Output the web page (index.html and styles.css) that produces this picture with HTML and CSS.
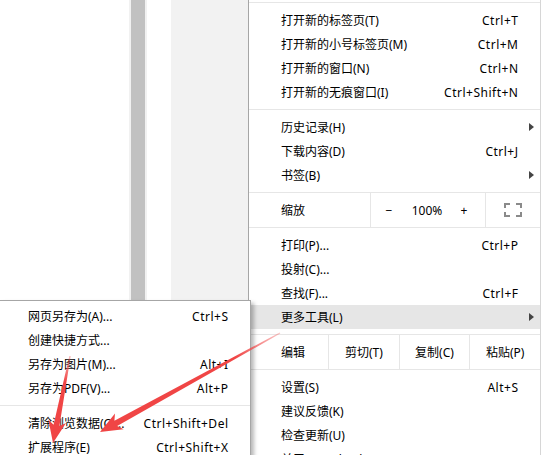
FILE: index.html
```html
<!DOCTYPE html>
<html lang="zh-CN">
<head>
  <meta charset="UTF-8">
  <title>更多工具</title>
  <link rel="stylesheet" href="styles.css">
</head>
<body>

<div class="screen">
  <div class="page-blank"></div>
  <div class="scrollbar"><div class="thumb"></div></div>
  <div class="page-gap"></div>
  <div class="page-panel"></div>

  <!-- menu principal -->
  <div class="menu">
    <div class="sep sep-top"></div>
    <div class="item"><span class="label">打开新的标签页(T)</span><span class="key">Ctrl+T</span></div>
    <div class="item"><span class="label">打开新的小号标签页(M)</span><span class="key">Ctrl+M</span></div>
    <div class="item"><span class="label">打开新的窗口(N)</span><span class="key">Ctrl+N</span></div>
    <div class="item"><span class="label">打开新的无痕窗口(I)</span><span class="key">Ctrl+Shift+N</span></div>
    <div class="sep"></div>
    <div class="item"><span class="label">历史记录(H)</span><span class="arrow"></span></div>
    <div class="item"><span class="label">下载内容(D)</span><span class="key">Ctrl+J</span></div>
    <div class="item"><span class="label">书签(B)</span><span class="arrow"></span></div>

    <div class="zoom">
      <div class="zoom-label">缩放</div>
      <div class="zoom-ctl">
        <span>−</span>
        <span>100%</span>
        <span>+</span>
      </div>
      <div class="zoom-full">
        <svg width="18" height="14" viewBox="0 0 18 14">
          <path d="M1 5V1H6M12 1H17V5M17 9V13H12M6 13H1V9" fill="none" stroke="#8a8a8a" stroke-width="2"/>
        </svg>
      </div>
    </div>

    <div class="item"><span class="label">打印(P)...</span><span class="key">Ctrl+P</span></div>
    <div class="item"><span class="label">投射(C)...</span></div>
    <div class="item"><span class="label">查找(F)...</span><span class="key">Ctrl+F</span></div>
    <div class="item active"><span class="label">更多工具(L)</span><span class="arrow"></span></div>

    <div class="edit">
      <div class="edit-label">编辑</div>
      <div class="edit-btn">剪切(T)</div>
      <div class="edit-btn">复制(C)</div>
      <div class="edit-btn">粘贴(P)</div>
    </div>

    <div class="item"><span class="label">设置(S)</span><span class="key">Alt+S</span></div>
    <div class="item"><span class="label">建议反馈(K)</span></div>
    <div class="item"><span class="label">检查更新(U)</span></div>
    <div class="item"><span class="label">关于 Google Chrome(G)</span></div>
  </div>
</div>

<!-- submenu de "更多工具" -->
<div class="submenu">
  <div class="item sub-item"><span class="label">网页另存为(A)...</span><span class="key">Ctrl+S</span></div>
  <div class="item sub-item"><span class="label">创建快捷方式...</span></div>
  <div class="item sub-item"><span class="label">另存为图片(M)...</span><span class="key">Alt+I</span></div>
  <div class="item sub-item"><span class="label">另存为PDF(V)...</span><span class="key">Alt+P</span></div>
  <div class="sep"></div>
  <div class="item sub-item"><span class="label">清除浏览数据(C)...</span><span class="key">Ctrl+Shift+Del</span></div>
  <div class="item sub-item"><span class="label">扩展程序(E)</span><span class="key">Ctrl+Shift+X</span></div>
</div>

<!-- flechas rojas de anotacion -->
<svg class="marks" width="541" height="455" viewBox="0 0 541 455">
  <defs>
    <linearGradient id="fade1" gradientUnits="userSpaceOnUse" x1="70" y1="356" x2="53" y2="443">
      <stop offset="0" stop-color="#f04545" stop-opacity="0.35"/>
      <stop offset="0.3" stop-color="#f04545"/>
      <stop offset="1" stop-color="#f04545"/>
    </linearGradient>
    <linearGradient id="fade2" gradientUnits="userSpaceOnUse" x1="280" y1="333" x2="100" y2="432">
      <stop offset="0" stop-color="#f04545" stop-opacity="0.3"/>
      <stop offset="0.25" stop-color="#f04545"/>
      <stop offset="1" stop-color="#f04545"/>
    </linearGradient>
  </defs>
  <polygon fill="url(#fade1)" points="53,443 66,423.1 59.4,425.9 70.7,356.1 69.3,355.9 53.6,424.7 48.4,419.7"/>
  <polygon fill="url(#fade2)" points="100,432 123.6,429.3 117.2,425.9 280.3,333.6 279.7,332.4 114.4,420.7 115,413.5"/>
</svg>

</body>
</html>
```

FILE: styles.css
```css
body {
  margin: 0;
  width: 541px;
  height: 455px;
  overflow: hidden;
  position: relative;
  font-family: "Noto Sans", "Noto Sans CJK SC", sans-serif;
  font-size: 12px;
  color: #000;
  background: #fff;
}

.screen {
  display: flex;
  height: 455px;
}

/* pagina de fondo */
.page-blank {
  width: 129px;
  background: #fff;
}

.scrollbar {
  width: 18px;
  box-sizing: border-box;
  padding: 0 2px;
  background: #f1f1f1;
}

.scrollbar .thumb {
  height: 100%;
  background: #c1c1c1;
}

.page-gap {
  width: 24px;
  background: #fff;
}

.page-panel {
  width: 77px;
  background: #f2f2f2;
}

/* menu */
.menu {
  width: 293px;
  box-sizing: border-box;
  border-left: 1px solid #a6a6a6;
  border-right: 1px solid #d6d6d6;
  background: #fff;
}

.sep {
  height: 1px;
  margin: 5px 0;
  background: #e6e6e6;
}

.sep-top {
  margin: 2px 0 5px;
}

.item {
  display: flex;
  align-items: center;
  height: 24px;
  padding: 0 22px 0 32px;
  white-space: nowrap;
}

.item .label {
  flex: 1;
}

.key {
  letter-spacing: 0.5px;
  margin-right: -0.5px;
}

.item.active {
  background: #e6e6e6;
}

.arrow {
  width: 0;
  height: 0;
  border-left: 5px solid #444;
  border-top: 4px solid transparent;
  border-bottom: 4px solid transparent;
  margin-right: -16px;
}

/* fila de zoom */
.zoom,
.edit {
  display: flex;
  height: 34px;
  margin: 5px 0;
  border-top: 1px solid #e6e6e6;
  border-bottom: 1px solid #e6e6e6;
}

.zoom-label {
  width: 121px;
  box-sizing: border-box;
  padding-left: 32px;
  display: flex;
  align-items: center;
}

.zoom-ctl {
  width: 116px;
  box-sizing: border-box;
  border-left: 1px solid #e6e6e6;
  border-right: 1px solid #e6e6e6;
  display: grid;
  grid-template-columns: 36px 40px 34px;
  align-items: center;
  text-align: center;
}

.zoom-full {
  flex: 1;
  display: flex;
  align-items: center;
  justify-content: center;
}

/* fila de editar */
.edit-label {
  width: 79px;
  box-sizing: border-box;
  padding-left: 32px;
  display: flex;
  align-items: center;
}

.edit-btn {
  flex: 1;
  border-left: 1px solid #e6e6e6;
  display: flex;
  align-items: center;
  justify-content: center;
}

/* submenu */
.submenu {
  position: absolute;
  left: 0;
  top: 300px;
  width: 251px;
  height: 170px;
  box-sizing: border-box;
  padding-top: 3px;
  border-top: 1px solid #a6a6a6;
  border-right: 1px solid #a6a6a6;
  background: #fff;
  box-shadow: 3px 3px 4px rgba(0, 0, 0, 0.28);
  z-index: 1;
}

.sub-item {
  padding: 0 22px 0 28px;
}

.marks {
  position: absolute;
  left: 0;
  top: 0;
  pointer-events: none;
  z-index: 2;
}
```
